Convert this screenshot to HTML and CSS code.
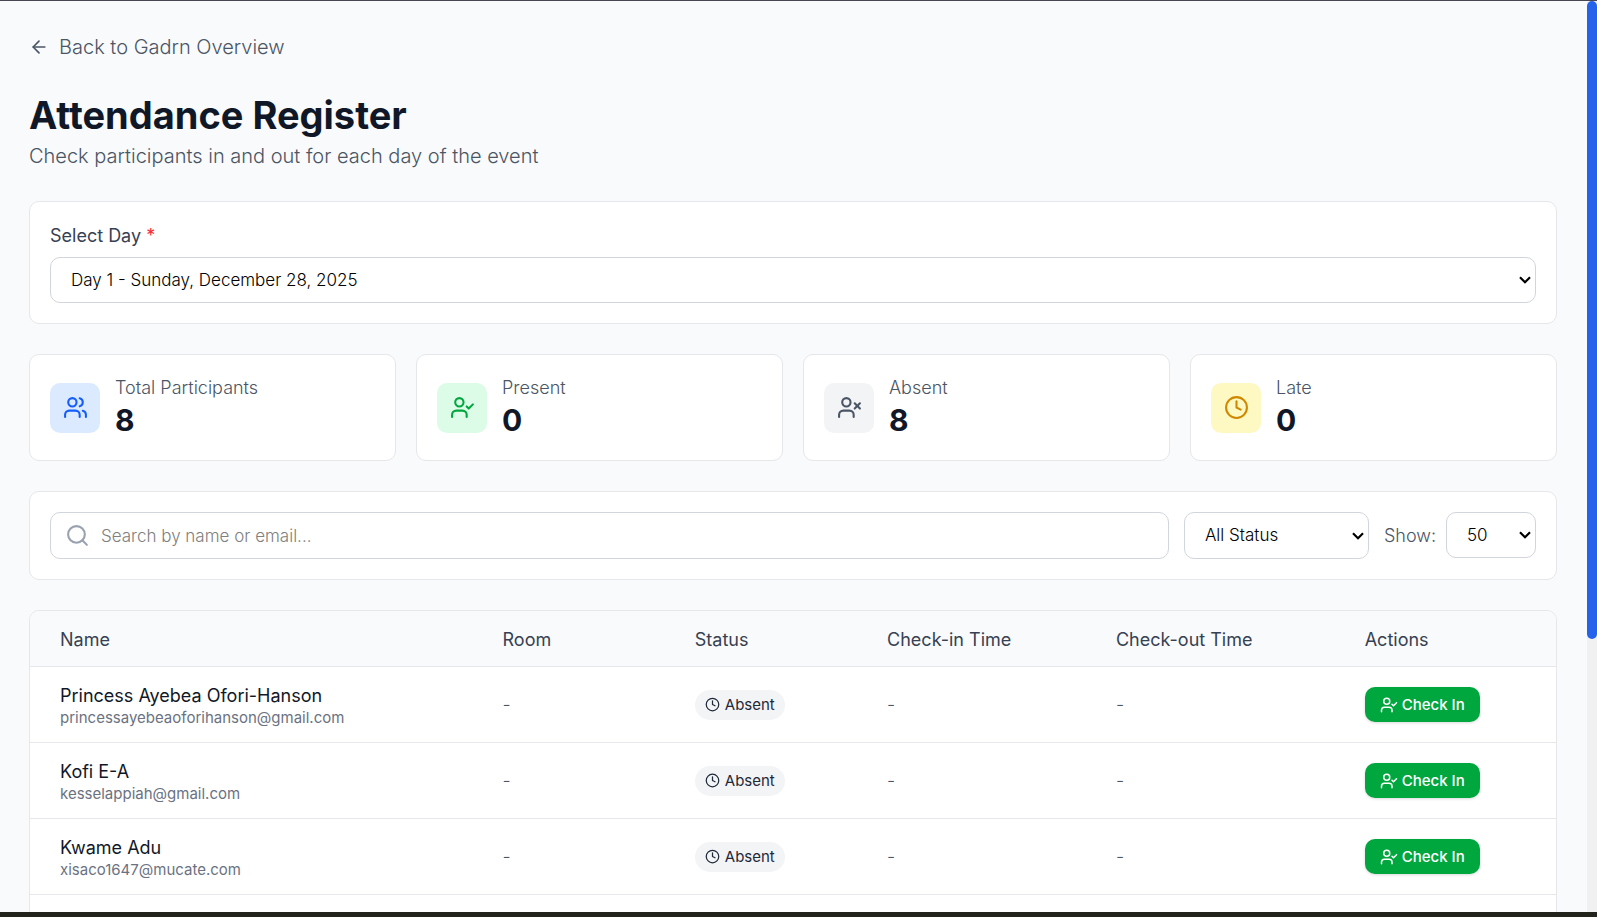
FILE: index.html
```html
<!DOCTYPE html>
<html lang="en">
<head>
    <meta charset="UTF-8">
    <title>Attendance Register</title>
    <link rel="stylesheet" href="styles.css">
</head>
<body>
    <!-- Icons -->
    <svg class="icon-sprite" aria-hidden="true">
        <symbol id="icon-arrow-left" viewBox="0 0 24 24"><path d="m12 19-7-7 7-7"/><path d="M19 12H5"/></symbol>
        <symbol id="icon-users" viewBox="0 0 24 24"><path d="M16 21v-2a4 4 0 0 0-4-4H6a4 4 0 0 0-4 4v2"/><path d="M16 3.128a4 4 0 0 1 0 7.744"/><path d="M22 21v-2a4 4 0 0 0-3-3.87"/><circle cx="9" cy="7" r="4"/></symbol>
        <symbol id="icon-user-check" viewBox="0 0 24 24"><path d="m16 11 2 2 4-4"/><path d="M16 21v-2a4 4 0 0 0-4-4H6a4 4 0 0 0-4 4v2"/><circle cx="9" cy="7" r="4"/></symbol>
        <symbol id="icon-user-x" viewBox="0 0 24 24"><path d="M16 21v-2a4 4 0 0 0-4-4H6a4 4 0 0 0-4 4v2"/><circle cx="9" cy="7" r="4"/><path d="m17 8 5 5"/><path d="m22 8-5 5"/></symbol>
        <symbol id="icon-clock" viewBox="0 0 24 24"><circle cx="12" cy="12" r="10"/><path d="M12 6v6l4 2"/></symbol>
        <symbol id="icon-search" viewBox="0 0 24 24"><circle cx="11" cy="11" r="8"/><path d="m21 21-4.34-4.34"/></symbol>
    </svg>

    <div class="screen">
        <main class="page">
            <a href="#" class="back-link">
                <svg class="icon icon-md"><use href="#icon-arrow-left"/></svg>
                Back to Gadrn Overview
            </a>

            <h1 class="title">Attendance Register</h1>
            <p class="subtitle">Check participants in and out for each day of the event</p>

            <!-- Day selector -->
            <div class="card day-card">
                <label for="day" class="day-label">Select Day <span class="required">*</span></label>
                <select id="day" class="field day-select">
                    <option>Day 1 - Sunday, December 28, 2025</option>
                </select>
            </div>

            <!-- Stats -->
            <div class="stats">
                <div class="card stat">
                    <div class="stat-icon blue"><svg class="icon icon-lg"><use href="#icon-users"/></svg></div>
                    <div>
                        <div class="stat-label">Total Participants</div>
                        <div class="stat-value">8</div>
                    </div>
                </div>
                <div class="card stat">
                    <div class="stat-icon green"><svg class="icon icon-lg"><use href="#icon-user-check"/></svg></div>
                    <div>
                        <div class="stat-label">Present</div>
                        <div class="stat-value">0</div>
                    </div>
                </div>
                <div class="card stat">
                    <div class="stat-icon gray"><svg class="icon icon-lg"><use href="#icon-user-x"/></svg></div>
                    <div>
                        <div class="stat-label">Absent</div>
                        <div class="stat-value">8</div>
                    </div>
                </div>
                <div class="card stat">
                    <div class="stat-icon yellow"><svg class="icon icon-lg"><use href="#icon-clock"/></svg></div>
                    <div>
                        <div class="stat-label">Late</div>
                        <div class="stat-value">0</div>
                    </div>
                </div>
            </div>

            <!-- Filters -->
            <div class="card filters">
                <div class="search">
                    <svg class="icon icon-lg search-icon"><use href="#icon-search"/></svg>
                    <input type="text" class="field search-input" placeholder="Search by name or email..." aria-label="Search by name or email">
                </div>
                <select class="field status-select" aria-label="Status">
                    <option>All Status</option>
                    <option>Present</option>
                    <option>Absent</option>
                    <option>Late</option>
                </select>
                <div class="page-size">
                    <label for="page-size">Show:</label>
                    <select id="page-size" class="field size-select">
                        <option>50</option>
                    </select>
                </div>
            </div>

            <!-- Participants -->
            <div class="card table-card">
                <table class="table">
                    <thead>
                        <tr>
                            <th class="col-name">Name</th>
                            <th class="col-room">Room</th>
                            <th class="col-status">Status</th>
                            <th class="col-in">Check-in Time</th>
                            <th class="col-out">Check-out Time</th>
                            <th>Actions</th>
                        </tr>
                    </thead>
                    <tbody>
                        <tr>
                            <td class="person">
                                <div class="name">Princess Ayebea Ofori-Hanson</div>
                                <div class="email">princessayebeaoforihanson@gmail.com</div>
                            </td>
                            <td>-</td>
                            <td><span class="badge"><svg class="icon icon-sm"><use href="#icon-clock"/></svg>Absent</span></td>
                            <td>-</td>
                            <td>-</td>
                            <td><button type="button" class="check-in-btn"><svg class="icon icon-btn"><use href="#icon-user-check"/></svg>Check In</button></td>
                        </tr>
                        <tr>
                            <td class="person">
                                <div class="name">Kofi E-A</div>
                                <div class="email">kesselappiah@gmail.com</div>
                            </td>
                            <td>-</td>
                            <td><span class="badge"><svg class="icon icon-sm"><use href="#icon-clock"/></svg>Absent</span></td>
                            <td>-</td>
                            <td>-</td>
                            <td><button type="button" class="check-in-btn"><svg class="icon icon-btn"><use href="#icon-user-check"/></svg>Check In</button></td>
                        </tr>
                        <tr>
                            <td class="person">
                                <div class="name">Kwame Adu</div>
                                <div class="email">xisaco1647@mucate.com</div>
                            </td>
                            <td>-</td>
                            <td><span class="badge"><svg class="icon icon-sm"><use href="#icon-clock"/></svg>Absent</span></td>
                            <td>-</td>
                            <td>-</td>
                            <td><button type="button" class="check-in-btn"><svg class="icon icon-btn"><use href="#icon-user-check"/></svg>Check In</button></td>
                        </tr>
                        <tr>
                            <td colspan="6"></td>
                        </tr>
                    </tbody>
                </table>
            </div>
        </main>
        <div class="scroll-track">
            <div class="scroll-thumb"></div>
        </div>
    </div>
</body>
</html>
```
FILE: styles.css
```css
* {
    box-sizing: border-box;
}
body {
    margin: 0;
    font-family: Inter, "Open Sans", sans-serif;
    font-weight: 300;
    font-size: 18px;
    line-height: 25px;
    color: #4a5565;
    background-color: #f9fafb;
}
.icon-sprite {
    display: none;
}
.icon {
    flex: none;
    fill: none;
    stroke: currentColor;
    stroke-width: 2;
    stroke-linecap: round;
    stroke-linejoin: round;
}
.icon-sm {
    width: 15px;
    height: 15px;
}
.icon-btn {
    width: 18px;
    height: 18px;
}
.icon-md {
    width: 20px;
    height: 20px;
}
.icon-lg {
    width: 25px;
    height: 25px;
}

/* Screen and scrollbar */
.screen {
    display: flex;
    height: 100vh;
    overflow: hidden;
    border-top: 1px solid #4a4552;
    border-bottom: 5px solid #22231a;
}
.page {
    flex: 1;
    min-width: 0;
    padding: 30px 30px 30px 29px;
}
.scroll-track {
    width: 10px;
    background-color: #f1f1f1;
}
.scroll-thumb {
    height: 70%;
    border-radius: 5px;
    background-color: #2563eb;
}

/* Header */
.back-link {
    display: flex;
    align-items: center;
    gap: 10px;
    margin-bottom: 27px;
    font-size: 20px;
    line-height: 32px;
    color: #4a5565;
    text-decoration: none;
}
.title {
    margin: 0;
    font-size: 38px;
    font-weight: 700;
    line-height: 50px;
    color: #101828;
}
.subtitle {
    margin: 0 0 29px;
    font-size: 20px;
    line-height: 32px;
}

/* Cards */
.card {
    margin-bottom: 30px;
    padding: 20px;
    background-color: white;
    border: 1px solid #e5e7eb;
    border-radius: 10px;
}
.field {
    height: 46px;
    padding: 0 20px;
    font: inherit;
    font-size: 17px;
    color: black;
    background-color: white;
    border: 1px solid #d1d5dc;
    border-radius: 10px;
}
select.field {
    appearance: none;
    background-image: url("data:image/svg+xml,%3Csvg xmlns='http://www.w3.org/2000/svg' width='12' height='8' viewBox='0 0 12 8'%3E%3Cpath d='M1 1.2 6 6.2 11 1.2' fill='none' stroke='black' stroke-width='2.2'/%3E%3C/svg%3E");
    background-repeat: no-repeat;
    background-position: right 4px center;
}
.day-label {
    display: block;
    margin-bottom: 8px;
    font-weight: 400;
    line-height: 27px;
    color: #364153;
}
.required {
    color: #fb2c36;
}
.day-select {
    display: block;
    width: 100%;
}

/* Stats */
.stats {
    display: grid;
    grid-template-columns: repeat(4, 1fr);
    gap: 20px;
    margin-bottom: 30px;
}
.stat {
    display: flex;
    align-items: center;
    gap: 15px;
    margin-bottom: 0;
}
.stat-icon {
    display: flex;
    align-items: center;
    justify-content: center;
    width: 50px;
    height: 50px;
    border-radius: 10px;
}
.blue {
    color: #155dfc;
    background-color: #dbeafe;
}
.green {
    color: #00a63e;
    background-color: #dcfce7;
}
.gray {
    color: #4a5565;
    background-color: #f3f4f6;
}
.yellow {
    color: #d08700;
    background-color: #fef9c2;
}
.stat-value {
    font-size: 30px;
    font-weight: 700;
    line-height: 40px;
    color: #101828;
}

/* Filters */
.filters {
    display: flex;
    align-items: flex-start;
    gap: 15px;
}
.search {
    position: relative;
    flex: 1;
}
.search-icon {
    position: absolute;
    top: 11px;
    left: 15px;
    color: #99a1af;
}
.search-input {
    display: block;
    width: 100%;
    height: 47px;
    padding-left: 50px;
}
.search-input::placeholder {
    color: #808080;
}
.status-select {
    width: 185px;
    height: 47px;
}
.page-size {
    display: flex;
    align-items: center;
    gap: 10px;
}
.size-select {
    width: 90px;
}

/* Table */
.table-card {
    padding: 0;
    overflow: hidden;
}
.table {
    width: 100%;
    table-layout: fixed;
    border-collapse: separate;
    border-spacing: 0;
}
.table th {
    height: 56px;
    padding: 2px 30px 0;
    font-weight: 400;
    text-align: left;
    color: #364153;
    background-color: #f9fafb;
    border-bottom: 1px solid #e5e7eb;
}
.table td {
    height: 76px;
    padding: 0 30px;
    border-bottom: 1px solid #e5e7eb;
}
.table .person {
    padding-top: 2px;
}
.col-name {
    width: 29%;
}
.col-room,
.col-status {
    width: 12.6%;
}
.col-in {
    width: 15%;
}
.col-out {
    width: 16.3%;
}
.name {
    font-weight: 400;
    color: #101828;
}
.email {
    font-size: 15px;
    font-weight: 400;
    line-height: 20px;
    color: #6a7282;
}
.badge {
    display: inline-flex;
    align-items: center;
    gap: 5px;
    padding: 5px 10px;
    font-size: 15px;
    font-weight: 400;
    line-height: 20px;
    color: #1e2939;
    background-color: #f3f4f6;
    border-radius: 15px;
    vertical-align: middle;
}
.check-in-btn {
    display: inline-flex;
    align-items: center;
    gap: 4px;
    height: 35px;
    padding: 0 15px;
    font-family: inherit;
    font-size: 15px;
    font-weight: 500;
    color: white;
    background-color: #00a63e;
    border: none;
    border-radius: 10px;
    box-shadow: 0 1px 3px rgba(0,0,0,0.15);
    vertical-align: middle;
    cursor: pointer;
}
```
